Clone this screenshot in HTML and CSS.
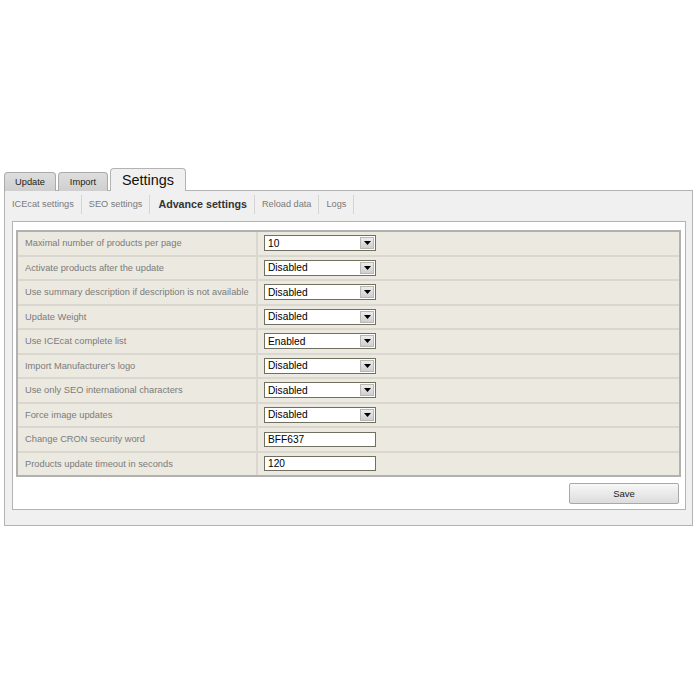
FILE: index.html
```html
<!DOCTYPE html>
<html lang="en">

<head>
   <meta charset="UTF-8">
   <title>ICEcat - Settings</title>
   <link rel="stylesheet" href="styles.css">
</head>

<body>
   <div class="module">
      <div class="tabs">
         <div class="tab" id="tab-update">Update</div>
         <div class="tab" id="tab-import">Import</div>
         <div class="tab active" id="tab-settings">Settings</div>
      </div>

      <div class="panel">
         <div class="subnav">
            <span class="sub">ICEcat settings</span>
            <span class="sub">SEO settings</span>
            <span class="sub current">Advance settings</span>
            <span class="sub">Reload data</span>
            <span class="sub">Logs</span>
         </div>

         <div class="box">
            <div class="settings">
               <div class="label">Maximal number of products per page</div>
               <div class="field">
                  <div class="select"><span>10</span><span class="arrow"><svg width="7" height="4" viewBox="0 0 7 4"><path d="M0 0H7L3.5 4Z" fill="#000"/></svg></span></div>
               </div>

               <div class="label">Activate products after the update</div>
               <div class="field">
                  <div class="select"><span>Disabled</span><span class="arrow"><svg width="7" height="4" viewBox="0 0 7 4"><path d="M0 0H7L3.5 4Z" fill="#000"/></svg></span></div>
               </div>

               <div class="label">Use summary description if description is not available</div>
               <div class="field">
                  <div class="select"><span>Disabled</span><span class="arrow"><svg width="7" height="4" viewBox="0 0 7 4"><path d="M0 0H7L3.5 4Z" fill="#000"/></svg></span></div>
               </div>

               <div class="label">Update Weight</div>
               <div class="field">
                  <div class="select"><span>Disabled</span><span class="arrow"><svg width="7" height="4" viewBox="0 0 7 4"><path d="M0 0H7L3.5 4Z" fill="#000"/></svg></span></div>
               </div>

               <div class="label">Use ICEcat complete list</div>
               <div class="field">
                  <div class="select"><span>Enabled</span><span class="arrow"><svg width="7" height="4" viewBox="0 0 7 4"><path d="M0 0H7L3.5 4Z" fill="#000"/></svg></span></div>
               </div>

               <div class="label">Import Manufacturer's logo</div>
               <div class="field">
                  <div class="select"><span>Disabled</span><span class="arrow"><svg width="7" height="4" viewBox="0 0 7 4"><path d="M0 0H7L3.5 4Z" fill="#000"/></svg></span></div>
               </div>

               <div class="label">Use only SEO international characters</div>
               <div class="field">
                  <div class="select"><span>Disabled</span><span class="arrow"><svg width="7" height="4" viewBox="0 0 7 4"><path d="M0 0H7L3.5 4Z" fill="#000"/></svg></span></div>
               </div>

               <div class="label">Force image updates</div>
               <div class="field">
                  <div class="select"><span>Disabled</span><span class="arrow"><svg width="7" height="4" viewBox="0 0 7 4"><path d="M0 0H7L3.5 4Z" fill="#000"/></svg></span></div>
               </div>

               <div class="label">Change CRON security word</div>
               <div class="field">
                  <input class="text" type="text" value="BFF637">
               </div>

               <div class="label">Products update timeout in seconds</div>
               <div class="field">
                  <input class="text" type="text" value="120">
               </div>
            </div>

            <div class="actions">
               <button class="save">Save</button>
            </div>
         </div>
      </div>
   </div>
</body>

</html>
```

FILE: styles.css
```css
* {
   margin: 0;
   padding: 0;
   box-sizing: border-box;
   font-family: "Liberation Sans", Arial, sans-serif;
}

body {
   background-color: #fff;
}

.module {
   width: 689px;
   margin-left: 4px;
   padding-top: 168px;
}

.tabs {
   display: flex;
   align-items: flex-end;
   gap: 2px;
   margin-bottom: -1px;
}

.tab {
   height: 19px;
   line-height: 18px;
   text-align: center;
   font-size: 9.3px;
   color: #222;
   background: linear-gradient(#dedede, #cfcfcf);
   border: 1px solid #a9a9a9;
   border-bottom: none;
   border-radius: 4px 4px 0 0;
}

#tab-update {
   width: 52px;
}

#tab-import {
   width: 50px;
}

#tab-settings {
   width: 76px;
}

.tab.active {
   height: 23px;
   line-height: 22px;
   font-size: 14.4px;
   color: #111;
   background: #f0f0f0;
   border-color: #b3b3b3;
   position: relative;
   z-index: 1;
}

.panel {
   background-color: #f0f0f0;
   border: 1px solid #b3b3b3;
   padding: 0 6px 15px 7px;
}

.subnav {
   display: flex;
   align-items: center;
   height: 24px;
   padding: 2px 0 0 0;
   margin-bottom: 6px;
}

.sub {
   font-size: 9.2px;
   color: #7a7a7a;
   padding: 0 7px;
   height: 19px;
   line-height: 19px;
   border-right: 1px solid #d4d4d4;
}

.sub:first-child {
   padding-left: 0;
}

.sub.current {
   font-size: 10.7px;
   font-weight: bold;
   color: #333;
   padding: 0 7px 0 8px;
}

.box {
   background-color: #fff;
   border: 1px solid #b3b3b3;
   padding: 8px 4px 5px 3px;
}

.settings {
   display: grid;
   grid-template-columns: 238px 1fr;
   gap: 2px;
   background-color: #d9d7cf;
   border: 2px solid #b1b1b1;
}

.label,
.field {
   background-color: #ebe9e0;
   height: 22.5px;
   display: flex;
   align-items: center;
}

.label {
   padding-left: 7px;
   font-size: 9.3px;
   color: #7b7b7b;
}

.field {
   padding-left: 6px;
}

.select,
.text {
   width: 112px;
   height: 16px;
   border: 1px solid #6f705f;
   background-color: #fff;
   font-size: 10.2px;
   color: #000;
}

.select {
   display: flex;
   align-items: center;
   justify-content: space-between;
   padding: 0 1px 0 3px;
}

.arrow {
   width: 14px;
   height: 12px;
   display: flex;
   align-items: center;
   justify-content: center;
   background: linear-gradient(#ececec, #cfcfcf);
   border: 1px solid #b8b8b0;
}

.text {
   height: 15px;
   padding: 0 3px;
   outline: none;
}

.actions {
   display: flex;
   justify-content: flex-end;
   padding: 6px 2px 0 0;
}

.save {
   width: 110px;
   height: 21px;
   font-size: 9.5px;
   font-weight: normal;
   color: #222;
   background: linear-gradient(#f7f7f7, #dcdcdc);
   border: 1px solid #a8a8a8;
   border-radius: 2px;
}
```
